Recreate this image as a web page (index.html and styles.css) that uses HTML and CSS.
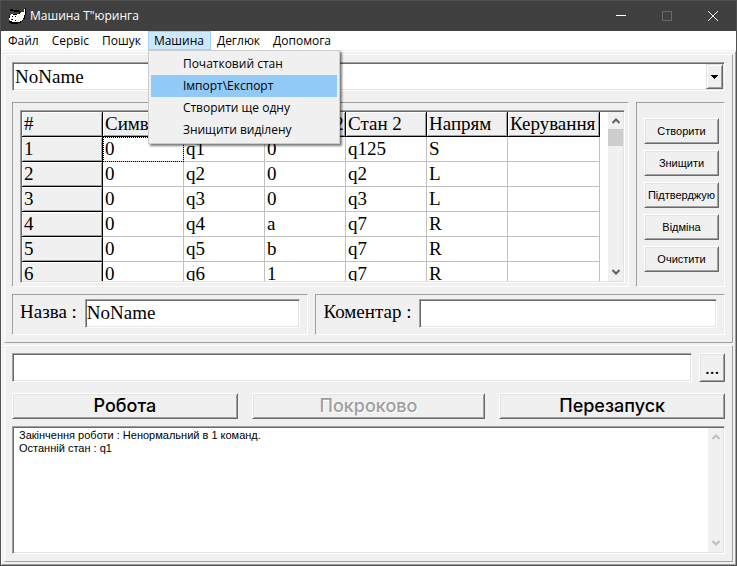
FILE: index.html
```
<!DOCTYPE html>
<html lang="uk">
<head>
<meta charset="utf-8">
<title>Машина Т"юринга</title>
<link rel="stylesheet" href="styles.css">
</head>
<body>
<div class="window">
  <header class="titlebar">
    <svg class="app-icon" viewBox="0 0 17 17" shape-rendering="crispEdges" aria-hidden="true">
      <path fill="#000" d="M1 1h3v1h6v1h1v2h5v-5h1v7h-1v4h-2v2h-2v2H9v1H2v-1H0v-2h1v-1H0V7h2V6h8V4H5V3H1z"/>
      <path fill="#fff" d="M1 7h1V6h2v1h4V6h3V5h1V4h3V1h1v6h-1v3h-1v2h-1v1h-2v1H3v-1H1v-1H0v-2h1z"/>
      <path fill="#000" d="M3 8h1v1H3zM6 8h1v1H6zM2 11h2v1H2zM6 12h1v1H6zM3 14h3v1H3z"/>
    </svg>
    <h1 class="title">Машина Т"юринга</h1>
    <div class="caption-buttons">
      <button class="caption" aria-label="Згорнути"><svg viewBox="0 0 10 10"><path d="M0 4.500h10"/></svg></button>
      <button class="caption" aria-label="Розгорнути" disabled><svg viewBox="0 0 10 10"><path d="M.5.5h9v9h-9z"/></svg></button>
      <button class="caption" aria-label="Закрити"><svg viewBox="0 0 10 10"><path d="M0 0l10 10M10 0L0 10"/></svg></button>
    </div>
  </header>
  <nav class="menubar">
    <button class="menu-item">Файл</button>
    <button class="menu-item">Сервіс</button>
    <button class="menu-item">Пошук</button>
    <div class="menu-holder">
      <button class="menu-item open" aria-expanded="true">Машина</button>
      <div class="dropdown" role="menu">
        <button class="option" role="menuitem">Початковий стан</button>
        <button class="option selected" role="menuitem">Імпорт\Експорт</button>
        <button class="option" role="menuitem">Створити ще одну</button>
        <button class="option" role="menuitem">Знищити виділену</button>
      </div>
    </div>
    <button class="menu-item">Деглюк</button>
    <button class="menu-item">Допомога</button>
  </nav>
  <main class="client">
    <section class="panel">
      <div class="combo sunken">
        <select class="combo-select" aria-label="Машина"><option>NoName</option></select>
        <span class="combo-arrow" aria-hidden="true"><svg viewBox="0 0 7 4" shape-rendering="crispEdges"><path d="M0 0h7v1H6v1H5v1H4v1H3V3H2V2H1V1H0z"/></svg></span>
      </div>
      <div class="row machine">
        <div class="group table-group">
          <div class="grid sunken">
            <div class="grid-view">
              <table class="rules">
                <thead>
                  <tr><th>#</th><th>Символ 1</th><th>Стан 1</th><th>Символ 2</th><th>Стан 2</th><th>Напрям</th><th class="wide">Керування</th></tr>
                </thead>
                <tbody>
                  <tr><th>1</th><td class="focused">0</td><td>q1</td><td>0</td><td>q125</td><td>S</td><td></td></tr>
                  <tr><th>2</th><td>0</td><td>q2</td><td>0</td><td>q2</td><td>L</td><td></td></tr>
                  <tr><th>3</th><td>0</td><td>q3</td><td>0</td><td>q3</td><td>L</td><td></td></tr>
                  <tr><th>4</th><td>0</td><td>q4</td><td>a</td><td>q7</td><td>R</td><td></td></tr>
                  <tr><th>5</th><td>0</td><td>q5</td><td>b</td><td>q7</td><td>R</td><td></td></tr>
                  <tr><th>6</th><td>0</td><td>q6</td><td>1</td><td>q7</td><td>R</td><td></td></tr>
                </tbody>
              </table>
            </div>
            <div class="scrollbar" aria-hidden="true">
              <svg class="chevron" viewBox="0 0 8 6"><path d="M.5 5L4 1.500 7.500 5"/></svg>
              <span class="thumb"></span>
              <svg class="chevron last" viewBox="0 0 8 6"><path d="M.5 1L4 4.500 7.500 1"/></svg>
            </div>
          </div>
        </div>
        <div class="group actions">
          <button class="btn">Створити</button>
          <button class="btn">Знищити</button>
          <button class="btn">Підтверджую</button>
          <button class="btn">Відміна</button>
          <button class="btn">Очистити</button>
        </div>
      </div>
      <div class="row">
        <div class="group field name-field">
          <label for="name">Назва :</label>
          <input class="text sunken" id="name" type="text" value="NoName">
        </div>
        <div class="group field comment-field">
          <label for="comment">Коментар :</label>
          <input class="text sunken" id="comment" type="text">
        </div>
      </div>
    </section>
    <section class="panel run">
      <div class="row">
        <input class="text sunken tape" type="text" aria-label="Стрічка">
        <button class="btn browse" aria-label="Огляд">...</button>
      </div>
      <div class="row run-buttons">
        <button class="btn big">Робота</button>
        <button class="btn big middle" disabled>Покроково</button>
        <button class="btn big">Перезапуск</button>
      </div>
      <div class="memo sunken">
        <textarea class="log" aria-label="Протокол" readonly>Закінчення роботи : Ненормальний в 1 команд.
Останній стан : q1</textarea>
        <div class="scrollbar inactive" aria-hidden="true">
          <svg class="chevron" viewBox="0 0 8 6"><path d="M.5 5L4 1.500 7.500 5"/></svg>
          <svg class="chevron last" viewBox="0 0 8 6"><path d="M.5 1L4 4.500 7.500 1"/></svg>
        </div>
      </div>
    </section>
  </main>
</div>
</body>
</html>
```

FILE: styles.css
```
* { box-sizing: border-box; }

body {
  margin: 0;
  background: #f0f0f0;
  color: #000;
  font: 12px/16px "Open Sans", sans-serif;
}

button, input, select, textarea {
  margin: 0;
  border: 0;
  border-radius: 0;
  padding: 0;
  color: inherit;
  font: inherit;
  background: none;
  outline: 0;
}

.window {
  display: flex;
  flex-direction: column;
  min-height: 100vh;
  border: 1px solid #505050;
}

/* Title bar and menus */
.titlebar {
  display: flex;
  align-items: center;
  height: 30px;
  padding-left: 8px;
  background: #404040;
  color: #fff;
}
.app-icon { width: 17px; height: 17px; }
.title {
  flex: 1;
  margin: 0 0 0 4px;
  font-size: 12px;
  font-weight: 400;
}
.caption-buttons { display: flex; }
.caption {
  display: flex;
  align-items: center;
  justify-content: center;
  width: 46px;
  height: 30px;
}
.caption svg {
  width: 10px;
  height: 10px;
  fill: none;
  stroke: #fff;
  overflow: visible;
}
.caption:disabled svg { stroke: #6a6a6a; }

.menubar {
  display: flex;
  height: 19px;
  padding-left: 1px;
  background: #fff;
}
.menu-item {
  height: 19px;
  padding: 0 7px 0 6px;
  line-height: 17px;
}
.menu-holder { position: relative; }
.menu-item.open {
  padding: 0 6px 0 5px;
  border: 1px solid #99d1ff;
  background: #cce8ff;
}
.dropdown {
  position: absolute;
  z-index: 2;
  top: 19px;
  left: 0;
  width: 192px;
  padding: 2px;
  border: 1px solid #ccc;
  background: #f0f0f0;
  box-shadow: 2px 2px 2px rgba(0, 0, 0, .5);
}
.option {
  display: block;
  width: 100%;
  height: 22px;
  padding-left: 32px;
  text-align: left;
}
.option.selected { background: #91c9f7; }

/* Frames */
.client {
  display: flex;
  flex: 1;
  flex-direction: column;
  gap: 2px;
  margin-top: 1px;
  padding: 2px;
  border: 1px solid;
  border-color: #fff #a0a0a0 #a0a0a0 #fff;
}
.panel {
  display: flex;
  flex-direction: column;
  gap: 7px;
  padding: 7px;
  border: 1px solid;
  border-color: #fff #a0a0a0 #a0a0a0 #fff;
}
.panel.run { flex: 1; }
.group {
  border: 1px solid;
  border-color: #a0a0a0 #fff #fff #a0a0a0;
}
.sunken {
  border: 1px solid;
  border-color: #a0a0a0 #fff #fff #a0a0a0;
  background: #fff;
  box-shadow: inset 1px 1px #696969, inset -1px -1px #e3e3e3;
}
.row {
  display: flex;
  gap: 7px;
}
.btn {
  height: 26px;
  border: 1px solid;
  border-color: #fff #696969 #696969 #fff;
  background: #f0f0f0;
  box-shadow: inset 1px 1px #e3e3e3, inset -1px -1px #a0a0a0;
  font: 11px/14px "Liberation Sans", sans-serif;
  white-space: nowrap;
}

/* Machine selector */
.combo {
  display: flex;
  height: 29px;
  padding: 1px;
}
.combo-select {
  flex: 1;
  appearance: none;
  padding-left: 1px;
  font: 19px/22px "Liberation Serif", serif;
}
.combo-arrow {
  display: flex;
  align-items: center;
  justify-content: center;
  width: 17px;
  border: 1px solid;
  border-color: #e3e3e3 #696969 #696969 #e3e3e3;
  background: #f0f0f0;
  box-shadow: inset 1px 1px #fff, inset -1px -1px #a0a0a0;
}
.combo-arrow svg { width: 7px; height: 4px; }

/* Rules table */
.machine { margin-top: 4px; }
.table-group {
  flex: 1;
  min-width: 0;
  padding: 7px 3px 3px 7px;
}
.grid {
  display: flex;
  height: 173px;
  padding: 1px;
}
.grid-view {
  flex: 1;
  min-width: 0;
  overflow: hidden;
}
.rules {
  width: 578px;
  border-spacing: 0;
  table-layout: fixed;
  font: 19px/24px "Liberation Serif", serif;
}
.rules th, .rules td {
  width: 81px;
  height: 25px;
  padding: 0 0 0 2px;
  border: solid #c0c0c0;
  border-width: 0 1px 1px 0;
  font-weight: 400;
  text-align: left;
  white-space: nowrap;
}
.rules th {
  border-color: #000;
  background: #f0f0f0;
  box-shadow: inset 1px 1px #fff, inset -1px -1px #a0a0a0;
}
.rules .wide { width: 92px; }
.rules .focused {
  outline: 1px dotted #000;
  outline-offset: -1px;
}
.scrollbar {
  display: flex;
  flex-direction: column;
  align-items: center;
  width: 15px;
  padding: 6px 0;
  background: #f0f0f0;
}
.chevron {
  flex: none;
  width: 8px;
  height: 6px;
  fill: none;
  stroke: #606060;
  stroke-width: 2;
}
.chevron.last { margin-top: auto; }
.inactive .chevron { stroke: #bfbfbf; }
.thumb {
  width: 15px;
  height: 17px;
  margin-top: 5px;
  background: #cdcdcd;
}

/* Machine actions */
.actions {
  display: flex;
  flex-direction: column;
  gap: 6px;
  width: 89px;
  padding: 15px 5px 0 7px;
}

/* Name and comment */
.field {
  display: flex;
  gap: 8px;
  min-width: 0;
  height: 41px;
  padding: 4px 7px;
  font: 19px/26px "Liberation Serif", serif;
}
.name-field { flex: 280; }
.comment-field { flex: 393; }
.text {
  flex: 1;
  min-width: 0;
  height: 29px;
  padding: 0 2px 2px 1px;
  font: 19px/24px "Liberation Serif", serif;
}

/* Run controls */
.browse {
  width: 26px;
  height: 29px;
  font: 19px/20px "Liberation Serif", serif;
}
.run-buttons {
  gap: 14px;
  margin-top: 4px;
}
.big {
  flex: 226;
  font: 500 18px/24px Inter, sans-serif;
}
.big.middle { flex: 234; }
.big:disabled {
  color: #a0a0a0;
  text-shadow: 1px 1px #fff;
}
.memo {
  display: flex;
  flex: 1;
  padding: 1px;
}
.log {
  flex: 1;
  resize: none;
  padding: 1px 5px;
  font: 11px/13px "Liberation Sans", sans-serif;
}
```
